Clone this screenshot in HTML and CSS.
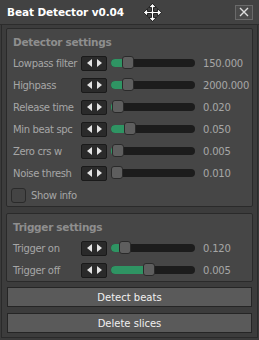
FILE: index.html
```html
<!DOCTYPE html>
<html>
<head>
<meta charset="utf-8">
<link rel="stylesheet" href="styles.css">
</head>
<body>
<div class="window">
  <div class="titlebar">
    <span class="title">Beat Detector v0.04</span>
    <svg class="move" width="19" height="19" viewBox="0 0 15 15">
      <path d="M7.5 0.5 L10.5 3.5 L8.3 3.5 L8.3 6.7 L11.5 6.7 L11.5 4.5 L14.5 7.5 L11.5 10.5 L11.5 8.3 L8.3 8.3 L8.3 11.5 L10.5 11.5 L7.5 14.5 L4.5 11.5 L6.7 11.5 L6.7 8.3 L3.5 8.3 L3.5 10.5 L0.5 7.5 L3.5 4.5 L3.5 6.7 L6.7 6.7 L6.7 3.5 L4.5 3.5 Z" fill="#fff" stroke="#111" stroke-width="0.7"/>
    </svg>
    <div class="close">
      <svg width="10" height="10" viewBox="0 0 10 10"><path d="M1 1 L9 9 M9 1 L1 9" stroke="#ddd" stroke-width="1.4"/></svg>
    </div>
  </div>
  <div class="body">
    <section class="panel">
      <h2>Detector settings</h2>
      <div class="row"><span class="label">Lowpass filter</span><span class="arrows"><i class="l"></i><i class="r"></i></span><span class="slider"><span class="fill" style="width:17px"></span><span class="thumb" style="left:11px"></span></span><span class="value">150.000</span></div>
      <div class="row"><span class="label">Highpass</span><span class="arrows"><i class="l"></i><i class="r"></i></span><span class="slider"><span class="fill" style="width:17px"></span><span class="thumb" style="left:11px"></span></span><span class="value">2000.000</span></div>
      <div class="row"><span class="label">Release time</span><span class="arrows"><i class="l"></i><i class="r"></i></span><span class="slider"><span class="fill" style="width:3px"></span><span class="thumb" style="left:1px"></span></span><span class="value">0.020</span></div>
      <div class="row"><span class="label">Min beat spc</span><span class="arrows"><i class="l"></i><i class="r"></i></span><span class="slider"><span class="fill" style="width:18px"></span><span class="thumb" style="left:13px"></span></span><span class="value">0.050</span></div>
      <div class="row"><span class="label">Zero crs w</span><span class="arrows"><i class="l"></i><i class="r"></i></span><span class="slider"><span class="fill" style="width:3px"></span><span class="thumb" style="left:1px"></span></span><span class="value">0.005</span></div>
      <div class="row"><span class="label">Noise thresh</span><span class="arrows"><i class="l"></i><i class="r"></i></span><span class="slider"><span class="fill" style="width:0px"></span><span class="thumb" style="left:0px"></span></span><span class="value">0.010</span></div>
      <div class="check"><span class="box"></span><span class="label">Show info</span></div>
    </section>
    <section class="panel">
      <h2>Trigger settings</h2>
      <div class="row"><span class="label">Trigger on</span><span class="arrows"><i class="l"></i><i class="r"></i></span><span class="slider"><span class="fill" style="width:12px"></span><span class="thumb" style="left:8px"></span></span><span class="value">0.120</span></div>
      <div class="row"><span class="label">Trigger off</span><span class="arrows"><i class="l"></i><i class="r"></i></span><span class="slider"><span class="fill" style="width:36px"></span><span class="thumb" style="left:32px"></span></span><span class="value">0.005</span></div>
    </section>
    <button class="btn first">Detect beats</button>
    <button class="btn">Delete slices</button>
  </div>
</div>
</body>
</html>
```
FILE: styles.css
```css
html, body {
  margin: 0;
  padding: 0;
  background: #333;
}
.window {
  width: 259px;
  height: 340px;
  box-sizing: border-box;
  background: #3a3a3a;
  font-family: "DejaVu Sans", sans-serif;
  display: flex;
  flex-direction: column;
}
.titlebar {
  height: 24px;
  display: flex;
  align-items: center;
  padding: 0 6px 0 7px;
  background: #424242;
  border-bottom: 1px solid #2c2c2c;
  position: relative;
}
.title {
  color: #fff;
  font-weight: bold;
  font-size: 10.5px;
  letter-spacing: -0.1px;
  flex: 1;
}
.move {
  position: absolute;
  left: 143px;
  top: 3px;
}
.close {
  width: 18px;
  height: 15px;
  box-sizing: border-box;
  border: 1px solid #6a6a6a;
  background: #4a4a4a;
  display: flex;
  align-items: center;
  justify-content: center;
}
.body {
  flex: 1;
  margin: 0 1px 2px 1px;
  padding: 3px 4px 4px 4px;
  border: 1px solid #2a2a2a;
  border-top: none;
  background: #3c3c3c;
  display: flex;
  flex-direction: column;
  gap: 6px;
}
.panel {
  background: #464646;
  border: 1px solid #2a2a2a;
  border-radius: 2px;
  padding: 6px 6px 0 6px;
}
h2 {
  margin: 0 0 3px 0;
  font-size: 10.5px;
  font-weight: bold;
  letter-spacing: -0.3px;
  color: #8e8e8e;
  height: 14px;
  line-height: 14px;
}
.row {
  display: grid;
  grid-template-columns: 64px 26px 84px auto;
  column-gap: 4px;
  align-items: center;
  height: 22px;
}
.label {
  color: #a6a6a6;
  font-size: 10px;
  letter-spacing: -0.35px;
  white-space: nowrap;
}
.arrows {
  height: 15px;
  box-sizing: border-box;
  background: #2a2a2a;
  border: 1px solid #1a1a1a;
  border-radius: 2px;
  display: flex;
  align-items: center;
  justify-content: center;
  gap: 5px;
}
.arrows i {
  width: 0;
  height: 0;
  border-top: 4px solid transparent;
  border-bottom: 4px solid transparent;
}
.arrows .l { border-right: 5px solid #e4e4e4; }
.arrows .r { border-left: 5px solid #e4e4e4; }
.slider {
  position: relative;
  height: 8px;
  background: #1c1c1c;
  border-radius: 4px;
}
.fill {
  position: absolute;
  left: 0;
  top: 0;
  bottom: 0;
  background: #2f9463;
  border-radius: 4px 0 0 4px;
}
.thumb {
  position: absolute;
  top: -3px;
  width: 12px;
  height: 13px;
  box-sizing: border-box;
  background: #5e5e5e;
  border: 1px solid #2a2a2a;
  border-radius: 3px;
}
.value {
  margin-left: 4px;
  color: #a6a6a6;
  font-size: 10px;
  letter-spacing: -0.2px;
}
.check {
  display: flex;
  align-items: center;
  gap: 5px;
  height: 22px;
}
.box {
  width: 15px;
  height: 15px;
  box-sizing: border-box;
  background: #444;
  border: 1px solid #2a2a2a;
  border-radius: 3px;
  margin-left: -2px;
}
.btn {
  height: 20px;
  margin: 0 1px;
  background: #5a5a5a;
  border: 1px solid #252525;
  color: #f0f0f0;
  font-family: "DejaVu Sans", sans-serif;
  font-size: 10px;
  padding: 0;
}
.btn.first {
  margin-top: -1px;
}
```
